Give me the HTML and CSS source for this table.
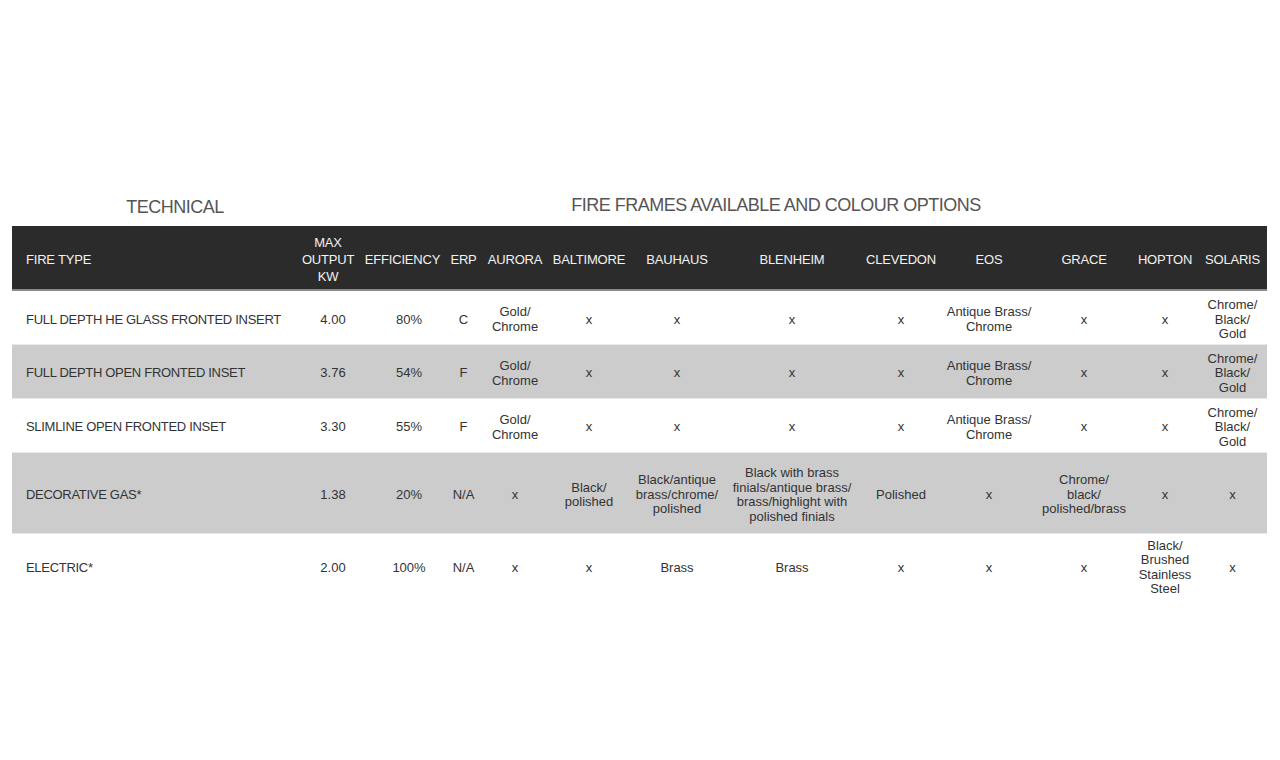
FILE: index.html
```html
<!DOCTYPE html>
<html lang="en">
<head>
<meta charset="utf-8">
<title>Fire specifications</title>
<link rel="stylesheet" href="styles.css">
</head>
<body>
<div class="page">
  <div class="titles">
    <h2 class="title title-tech">TECHNICAL</h2>
    <h2 class="title title-frames">FIRE FRAMES AVAILABLE AND COLOUR OPTIONS</h2>
  </div>
  <table class="spec">
    <colgroup>
      <col class="c-type"><col class="c-out"><col class="c-eff"><col class="c-erp">
      <col class="c-aur"><col class="c-bal"><col class="c-bau"><col class="c-ble">
      <col class="c-cle"><col class="c-eos"><col class="c-gra"><col class="c-hop"><col class="c-sol">
    </colgroup>
    <thead>
      <tr>
        <th class="first">FIRE TYPE</th>
        <th>MAX<br>OUTPUT<br>KW</th>
        <th>EFFICIENCY</th>
        <th>ERP</th>
        <th>AURORA</th>
        <th>BALTIMORE</th>
        <th>BAUHAUS</th>
        <th>BLENHEIM</th>
        <th>CLEVEDON</th>
        <th>EOS</th>
        <th>GRACE</th>
        <th>HOPTON</th>
        <th>SOLARIS</th>
      </tr>
    </thead>
    <tbody>
      <tr class="row">
        <td class="first">FULL DEPTH HE GLASS FRONTED INSERT</td>
        <td class="num-out">4.00</td>
        <td class="num-eff">80%</td>
        <td>C</td>
        <td>Gold/<br>Chrome</td>
        <td>x</td><td>x</td><td>x</td><td>x</td>
        <td>Antique Brass/<br>Chrome</td>
        <td>x</td><td>x</td>
        <td>Chrome/<br>Black/<br>Gold</td>
      </tr>
      <tr class="row shaded">
        <td class="first">FULL DEPTH OPEN FRONTED INSET</td>
        <td class="num-out">3.76</td>
        <td class="num-eff">54%</td>
        <td>F</td>
        <td>Gold/<br>Chrome</td>
        <td>x</td><td>x</td><td>x</td><td>x</td>
        <td>Antique Brass/<br>Chrome</td>
        <td>x</td><td>x</td>
        <td>Chrome/<br>Black/<br>Gold</td>
      </tr>
      <tr class="row">
        <td class="first">SLIMLINE OPEN FRONTED INSET</td>
        <td class="num-out">3.30</td>
        <td class="num-eff">55%</td>
        <td>F</td>
        <td>Gold/<br>Chrome</td>
        <td>x</td><td>x</td><td>x</td><td>x</td>
        <td>Antique Brass/<br>Chrome</td>
        <td>x</td><td>x</td>
        <td>Chrome/<br>Black/<br>Gold</td>
      </tr>
      <tr class="row shaded tall">
        <td class="first">DECORATIVE GAS*</td>
        <td class="num-out">1.38</td>
        <td class="num-eff">20%</td>
        <td>N/A</td>
        <td>x</td>
        <td>Black/<br>polished</td>
        <td>Black/antique<br>brass/chrome/<br>polished</td>
        <td>Black with brass<br>finials/antique brass/<br>brass/highlight with<br>polished finials</td>
        <td>Polished</td>
        <td>x</td>
        <td>Chrome/<br>black/<br>polished/brass</td>
        <td>x</td>
        <td>x</td>
      </tr>
      <tr class="row last">
        <td class="first">ELECTRIC*</td>
        <td class="num-out">2.00</td>
        <td class="num-eff">100%</td>
        <td>N/A</td>
        <td>x</td>
        <td>x</td>
        <td>Brass</td>
        <td>Brass</td>
        <td>x</td><td>x</td><td>x</td>
        <td>Black/<br>Brushed<br>Stainless<br>Steel</td>
        <td>x</td>
      </tr>
    </tbody>
  </table>
</div>
</body>
</html>
```
FILE: styles.css
```css
html, body {
  margin: 0;
  padding: 0;
  background: #ffffff;
}

.page {
  padding: 190px 13px 0 12px;
  font-family: "Liberation Sans", Arial, sans-serif;
  color: #333333;
}

.titles {
  display: flex;
  align-items: flex-start;
  height: 36px;
}

.title {
  margin: 0;
  font-weight: normal;
  font-size: 18px;
  letter-spacing: -0.5px;
  color: #555555;
  line-height: 22px;
  text-align: center;
}

.title-tech {
  width: 326px;
  margin-top: 6px;
}

.title-frames {
  width: 876px;
  margin-top: 4px;
}

.spec {
  border-collapse: collapse;
  table-layout: fixed;
  width: 1255px;
  font-size: 13px;
}

.c-type { width: 284px; }
.c-out { width: 64px; }
.c-eff { width: 85px; }
.c-erp { width: 37px; }
.c-aur { width: 66px; }
.c-bal { width: 82px; }
.c-bau { width: 94px; }
.c-ble { width: 136px; }
.c-cle { width: 82px; }
.c-eos { width: 94px; }
.c-gra { width: 96px; }
.c-hop { width: 66px; }
.c-sol { width: 69px; }

.spec thead tr {
  background: #2b2b2b;
  height: 64px;
  border-bottom: 2px solid #8a8a8a;
}

.spec th {
  color: #f2f2f2;
  font-weight: normal;
  font-size: 13px;
  line-height: 17px;
  text-align: center;
  padding: 4px 0 0 0;
  white-space: nowrap;
  letter-spacing: -0.2px;
}

.spec th.first,
.spec td.first {
  text-align: left;
  padding-left: 14px;
}

.spec td {
  text-align: center;
  vertical-align: middle;
  padding: 5px 0 0 0;
  line-height: 14.5px;
  white-space: nowrap;
}

.spec td.first {
  letter-spacing: -0.3px;
}

.row {
  height: 54px;
  border-bottom: 1px solid #e8e8e8;
}

.row.shaded {
  background: #cccccc;
}

.row.tall {
  height: 81px;
}

.row.last {
  height: 64px;
  border-bottom: none;
}

.spec td.num-out {
  padding-left: 10px;
}

.spec td.num-eff {
  padding-left: 13px;
}
```
